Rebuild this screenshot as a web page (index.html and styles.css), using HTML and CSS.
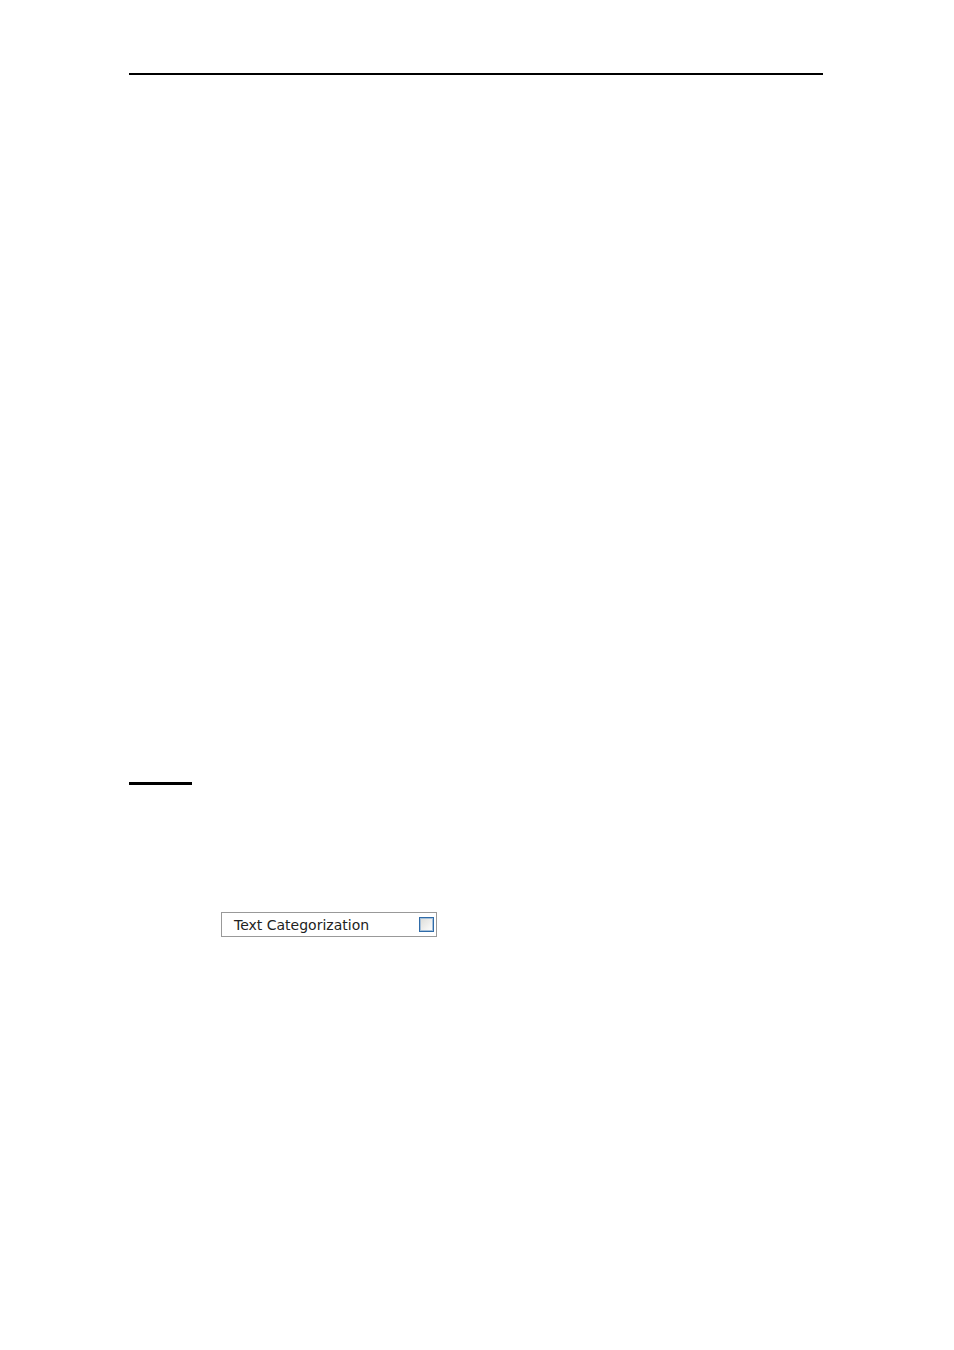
FILE: index.html
```html
<!DOCTYPE html>
<html lang="en">

<head>
  <meta charset="UTF-8">
  <meta name="viewport" content="width=device-width, initial-scale=1.0">
  <title>Text Categorization</title>
  <link rel="stylesheet" href="styles.css">
</head>

<body>
  <main class="page">
    <hr class="header-line">
    <hr class="section-line">

    <label class="option" for="text-categorization">
      <span>Text Categorization</span>
      <input type="checkbox" id="text-categorization" class="option-check">
    </label>
  </main>
</body>

</html>
```
FILE: styles.css
```css
* {
  margin: 0;
  padding: 0;
  box-sizing: border-box;
}

body {
  font-family: Verdana, "DejaVu Sans", sans-serif;
  background-color: #fff;
}

.page {
  min-height: 100vh;
  padding: 73px 131px 0 129px;
}

.header-line {
  border: none;
  height: 2px;
  background-color: #000;
}

.section-line {
  width: 63px;
  height: 3px;
  margin-top: 707px;
  border: none;
  background-color: #000;
}

.option {
  display: flex;
  align-items: center;
  justify-content: space-between;
  width: 216px;
  height: 25px;
  margin: 127px 0 0 92px;
  padding: 0 2px 0 12px;
  border: 1px solid #999;
  font-size: 14px;
  line-height: 20px;
  color: #222;
}

.option-check {
  appearance: none;
  width: 15px;
  height: 15px;
  border: 1px solid #2f6ba8;
  background: linear-gradient(135deg, #dcdcd8, #fff);
  box-shadow: inset 0 0 0 1px #a5c0da;
}

.option-check:checked {
  background: #2f6ba8;
}
```
